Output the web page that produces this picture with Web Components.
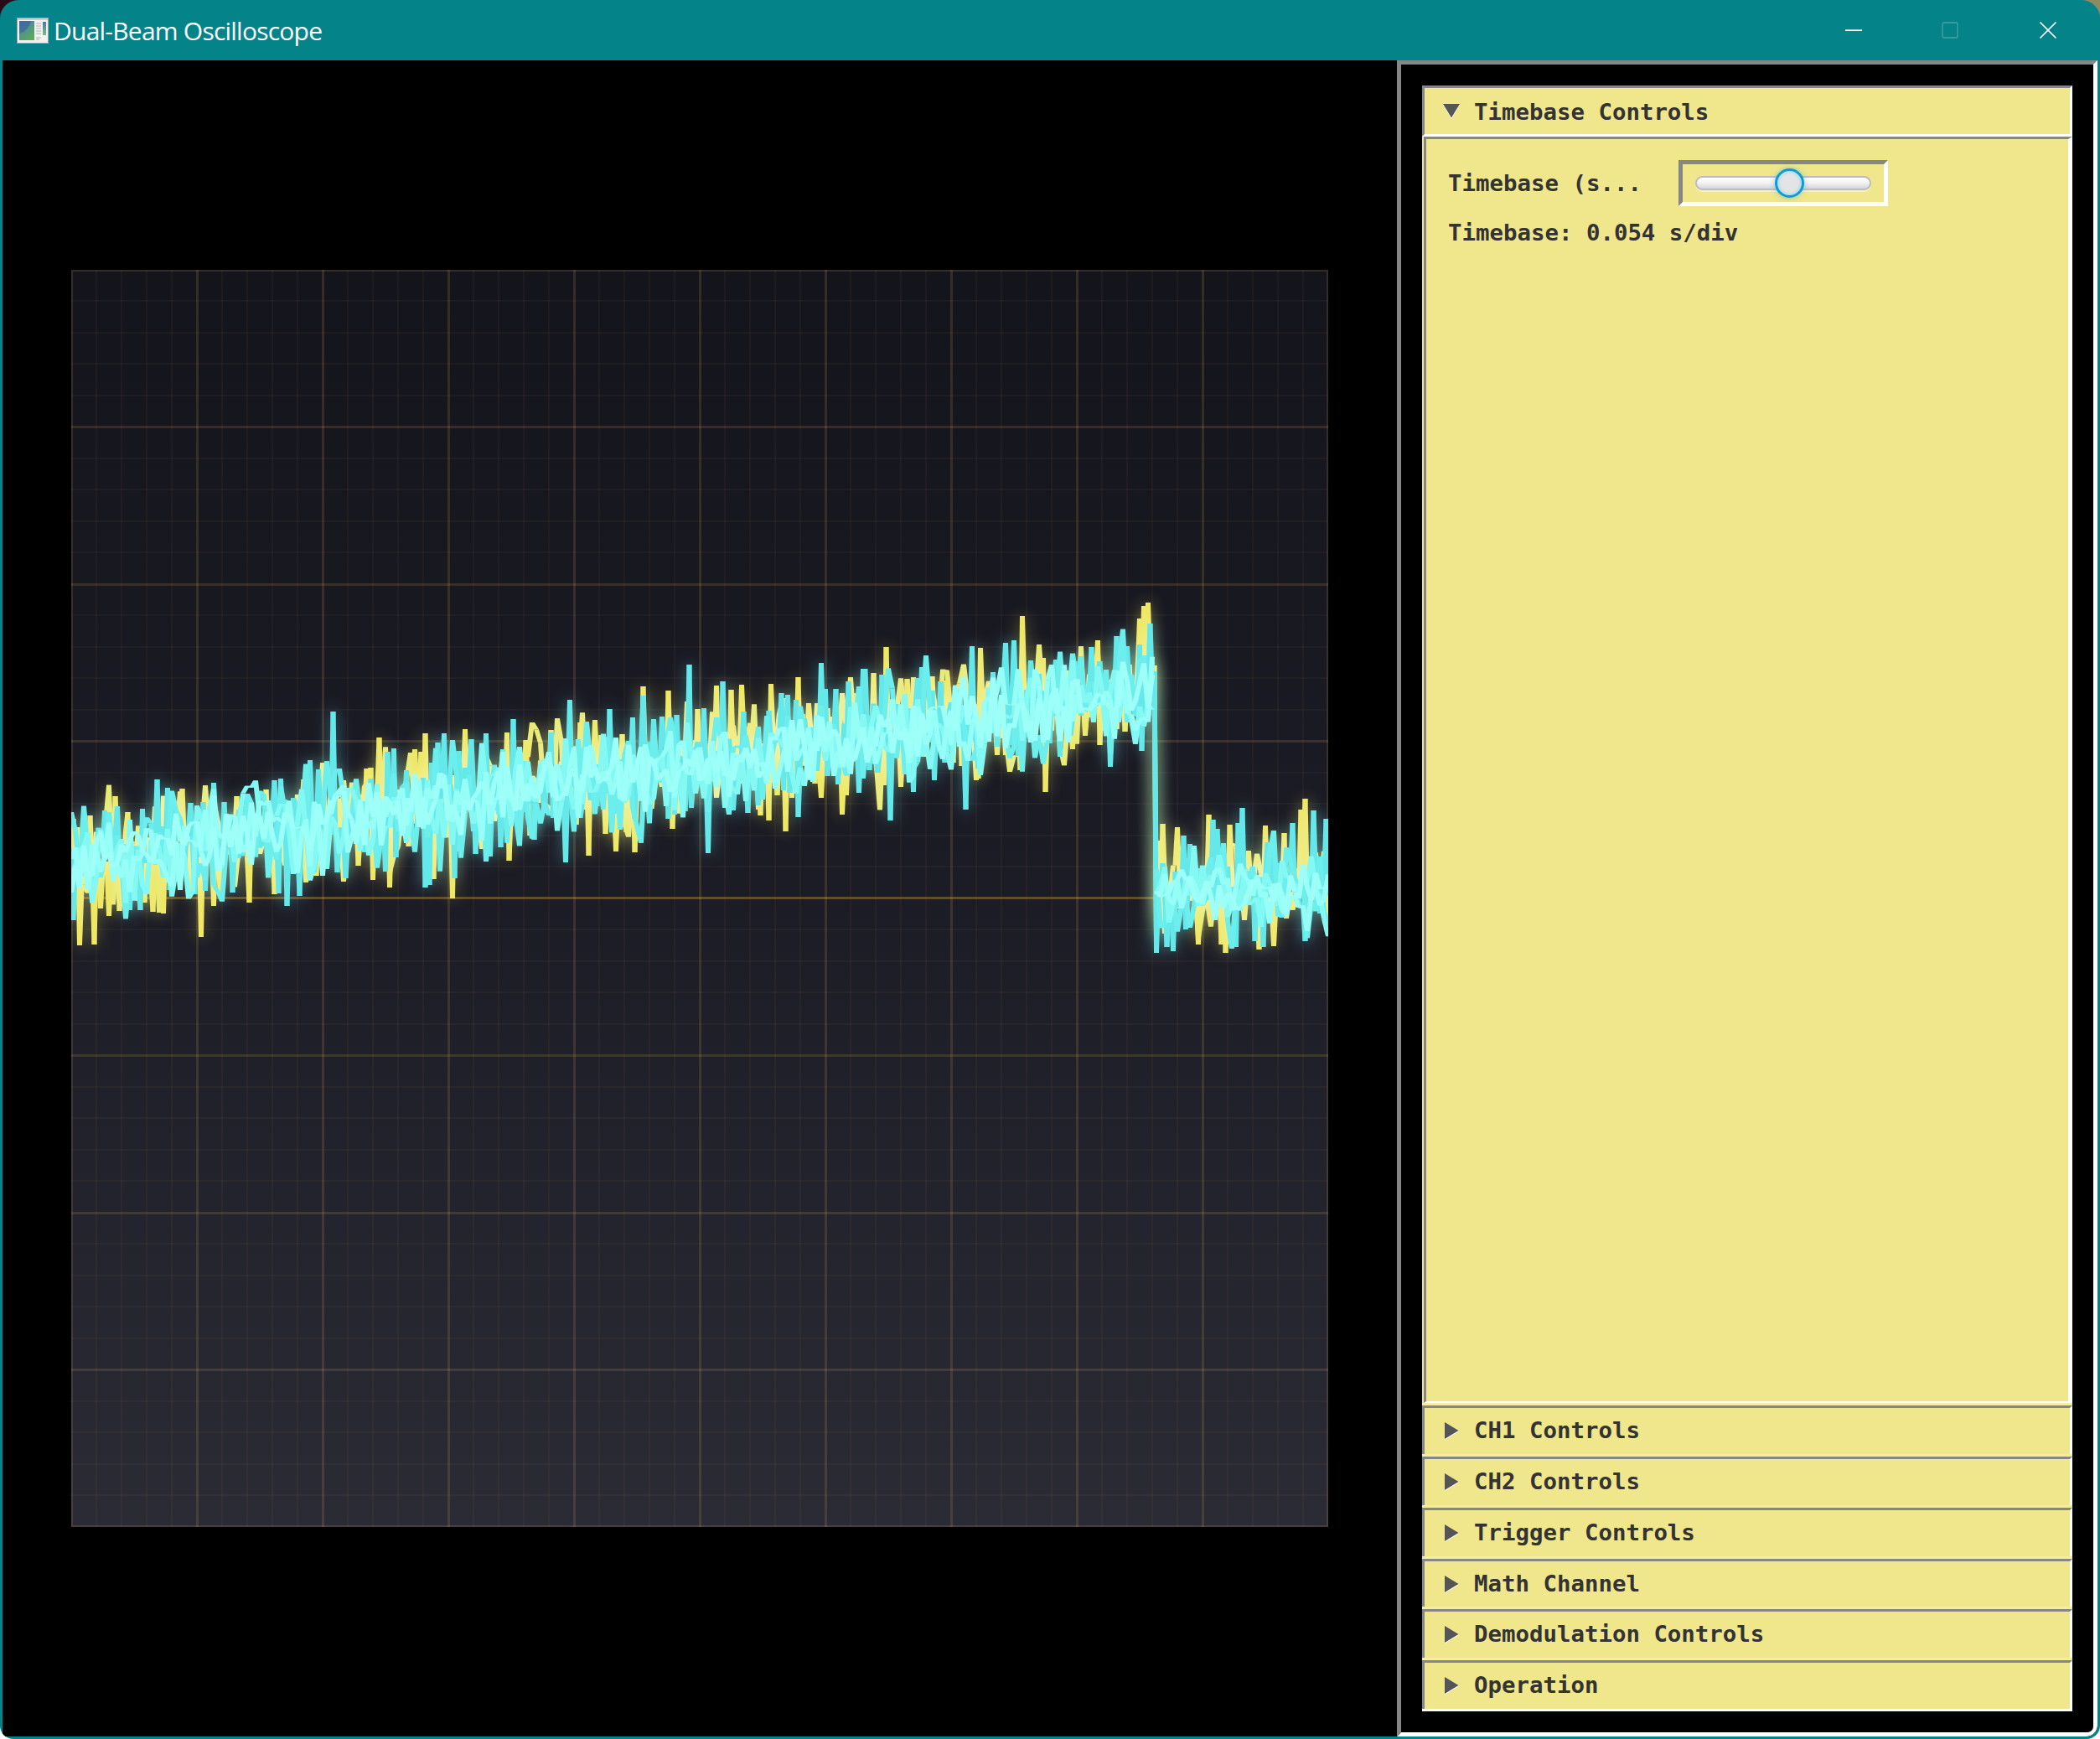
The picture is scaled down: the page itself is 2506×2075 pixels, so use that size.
<!DOCTYPE html>
<html>
<head>
<meta charset="utf-8">
<title>Dual-Beam Oscilloscope</title>
<style>
  html, body { margin: 0; padding: 0; }
  body {
    width: 2506px;
    height: 2075px;
    overflow: hidden;
    background:
      linear-gradient(#2a0a14, #2a0a14) 0 0 / 40px 40px no-repeat,
      linear-gradient(#8f8a60, #8f8a60) 100% 0 / 40px 40px no-repeat,
      #ffffff;
  }
</style>
</head>
<body>
<app-window>
  <title-bar slot="bar">Dual-Beam Oscilloscope</title-bar>
  <scope-view></scope-view>
  <control-panel>
    <accordion-section heading="Timebase Controls" open first>
      <timebase-row label="Timebase (s..." value="Timebase: 0.054 s/div"></timebase-row>
    </accordion-section>
    <accordion-section heading="CH1 Controls"></accordion-section>
    <accordion-section heading="CH2 Controls"></accordion-section>
    <accordion-section heading="Trigger Controls"></accordion-section>
    <accordion-section heading="Math Channel"></accordion-section>
    <accordion-section heading="Demodulation Controls"></accordion-section>
    <accordion-section heading="Operation"></accordion-section>
  </control-panel>
</app-window>

<script>
class AppWindow extends HTMLElement {
  connectedCallback() {
    this.attachShadow({ mode: 'open' });
    this.shadowRoot.innerHTML = `
      <style>
        :host {
          display: flex;
          flex-direction: column;
          width: 2506px;
          height: 2075px;
          box-sizing: border-box;
          background: #048388;
          border-radius: 22px 22px 16px 16px;
          overflow: hidden;
        }
        .body {
          flex: 1;
          min-height: 0;
          display: flex;
          margin: 0 3px 3px 3px;
          background: #000;
          border-bottom-right-radius: 14px;
          overflow: hidden;
        }
      </style>
      <slot name="bar"></slot>
      <div class="body"><slot></slot></div>
    `;
  }
}

class TitleBar extends HTMLElement {
  connectedCallback() {
    this.attachShadow({ mode: 'open' });
    this.shadowRoot.innerHTML = `
      <style>
        :host {
          display: flex;
          align-items: center;
          height: 72px;
          flex: none;
          color: #fff;
          font: 400 30px "Open Sans", "Noto Sans", sans-serif;
        }
        .icon { margin: 1px 6px 0 20px; flex: none; display: block; }
        .text { flex: 1; letter-spacing: -0.77px; padding-top: 1px; }
        .btn { display: flex; align-items: center; justify-content: center; width: 115px; height: 72px; }
        .btn.close { width: 119px; margin-right: 2.5px; }
        svg { display: block; }
      </style>
      <svg class="icon" width="38" height="31" viewBox="0 0 38 31">
        <defs>
          <linearGradient id="plot" x1="0" y1="0" x2="0.7" y2="1">
            <stop offset="0" stop-color="#3f6fa8"/>
            <stop offset="0.5" stop-color="#4f9488"/>
            <stop offset="1" stop-color="#5ea85a"/>
          </linearGradient>
          <linearGradient id="side" x1="0" y1="0" x2="0" y2="1">
            <stop offset="0" stop-color="#4a78a8"/>
            <stop offset="1" stop-color="#7fb98a"/>
          </linearGradient>
        </defs>
        <rect x="0.5" y="0.5" width="37" height="30" fill="#f2f2f2" stroke="#a5a5a5"/>
        <rect x="1" y="1" width="36" height="2" fill="#cfcfcf"/>
        <rect x="3" y="4" width="18" height="23" fill="url(#plot)"/>
        <path d="M3 4 H17 C15 12 10 17 3 19 Z" fill="#3d669e" opacity="0.7"/>
        <path d="M23 7h6M23 10h6M23 13h6M23 16h6M23 19h6M23 24h6M23 26h4" stroke="#b4b4b4" stroke-width="1"/>
        <rect x="31" y="5" width="4" height="16" fill="url(#side)"/>
      </svg>
      <span class="text"><slot></slot></span>
      <div class="btn"><svg width="20" height="20" viewBox="0 0 20 20"><path d="M0 10.2H20" stroke="#fff" stroke-width="1.7"/></svg></div>
      <div class="btn"><svg width="20" height="20" viewBox="0 0 20 20"><rect x="1" y="1" width="18" height="18" rx="2" fill="none" stroke="#389a9e" stroke-width="1.8"/></svg></div>
      <div class="btn close"><svg width="20" height="20" viewBox="0 0 20 20"><path d="M0.5 0.5L19.5 19.5M19.5 0.5L0.5 19.5" stroke="#f2f6f6" stroke-width="1.6"/></svg></div>
    `;
  }
}

// spike tables read off the trace, screen px [x, y]
const CYAN = [
  [188,930],[199,940],[170,965],[126,967],[139,962],[207,955],[227,958],[243,957],[255,934],[268,957],[298,953],[328,931],[334,929],[351,952],[369,907],[379,918],[398,849],[434,928],[443,929],[462,897],[471,893],[486,919],[495,928],[514,910],[523,886],[530,875],[563,882],[548,896],
  [88,1098],[156,1086],[167,1086],[203,1062],[233,1067],[277,1065],[244,1063],[332,1066],[342,1081],[358,1069],[390,1037],[403,1041],[412,1048],[435,1017],[459,1040],[473,1023],[507,1059],[512,1056],[542,1048],[568,1019],
  [580,875],[613,858],[658,874],[681,835],[698,892],[728,846],[754,856],[767,830],[779,858],[790,855],
  [586,1022],[597,1011],[619,977],[638,1002],[660,976],[674,1029],[693,976],[712,962],[732,971],[758,977],[773,952],[797,977],
  [807,853],[822,793],[841,845],[863,813],[887,849],[918,848],[932,827],[940,829],[949,835],[961,857],[979,791],[985,822],[998,822],[1013,813],[1029,798],
  [805,972],[817,968],[825,964],[846,1018],[867,960],[874,967],[893,970],[904,961],[935,943],[943,946],[953,975],[975,920],[988,926],[1000,936],[1026,946],
  [1032,798],[1052,805],[1069,840],[1101,796],[1096,809],[1112,824],[1122,813],[1145,823],[1161,771],[1185,802],[1199,767],[1210,764],[1230,788],[1240,804],[1260,787],
  [1037,919],[1047,922],[1063,979],[1090,945],[1116,931],[1127,910],[1153,966],[1168,917],[1190,891],[1205,889],[1215,902],[1222,880],[1242,863],[1252,887],
  [1283,789],[1302,772],[1313,789],[1333,759],[1345,771],[1360,769],[1373,744],
  [1264,903],[1277,878],[1324,915],[1363,896],
  [1380,1137],[1388,1030],[1412,997],[1420,1007],[1448,978],[1453,989],[1478,982],[1483,964],[1513,1005],[1521,1004],[1542,982],[1568,967],[1582,977],
  [1392,1130],[1399,1135],[1414,1109],[1474,1130],[1498,1123],[1508,1130],[1557,1123],[1575,1090]
];
const YELLOW = [
  [87,977],[93,987],[107,973],[119,944],[137,950],[152,969],[218,941],[245,954],[283,950],[317,942],[363,930],[409,931],[438,917],[443,916],[453,880],[495,894],[502,897],[508,875],[556,870],
  [96,1128],[113,1127],[130,1093],[143,1087],[182,1088],[195,1090],[121,1084],[173,1077],[224,1068],[241,1118],[255,1081],[263,1065],[297,1077],[327,1067],[370,1038],[377,1045],[427,1033],[445,1050],[465,1059],[487,1010],[517,1049],[539,1072],
  [606,874],[628,883],[657,871],[692,862],[709,859],[718,877],[743,876],[767,819],[797,824],
  [608,1027],[621,993],[632,997],[687,984],[702,1021],[723,995],[736,1016],[747,993],[758,1017],[777,965],
  [833,846],[855,818],[872,823],[886,817],[899,870],[921,816],[953,808],[966,839],[988,845],[1022,827],
  [802,989],[917,979],[908,973],[928,949],[938,992],[946,952],[972,935],[979,952],[1004,972],[1010,949],
  [1043,803],[1058,772],[1083,810],[1112,807],[1131,812],[1137,813],[1146,817],[1170,773],[1221,735],[1245,785],[1257,797],
  [1055,937],[1075,939],[1104,903],[1138,910],[1147,914],[1167,929],[1191,901],[1199,901],[1217,919],[1247,945],
  [1272,800],[1294,783],[1311,764],[1360,738],[1365,723],[1369,719],
  [1264,897],[1281,894],[1296,872],[1313,889],[1332,870],[1343,873],
  [1379,1118],[1388,983],[1405,987],[1425,1015],[1442,972],[1467,984],[1490,1015],[1511,985],[1532,994],[1557,953],[1552,966],
  [1431,1127],[1444,1098],[1463,1137],[1458,1127],[1486,1098],[1502,1133],[1520,1129],[1536,1096],[1582,1103]
];

class ScopeView extends HTMLElement {
  connectedCallback() {
    this.attachShadow({ mode: 'open' });
    this.shadowRoot.innerHTML = `
      <style>
        :host {
          display: flex;
          flex: 1;
          min-width: 0;
          align-items: center;
          justify-content: center;
          background: #000;
        }
        canvas { display: block; width: 1500px; height: 1500px; }
      </style>
      <canvas width="1500" height="1500"></canvas>
    `;
    this.draw(this.shadowRoot.querySelector('canvas').getContext('2d'));
  }

  samples(table, seed, amp, step) {
    let s = seed;
    const rnd = () => {
      s = (s * 16807) % 2147483647;
      return s / 2147483647;
    };
    const count = Math.round(1500 / step);
    const pts = [];
    for (let i = 0; i <= count; i++) {
      const x = 85 + i * step;
      const before = x < 1378;
      const mid = before ? 1030 - (x - 85) * (205 / 1292) : 1062;
      const wander = Math.sin(x / 37 + seed) * 6;
      pts.push([x - 85, mid + wander + (rnd() + rnd() - 1) * amp * (before ? 1 : 0.82) - 322]);
    }
    table.forEach(([x, y]) => {
      const i = Math.max(0, Math.min(count, Math.round((x - 85) / step)));
      pts[i][1] = y - 322;
    });
    return pts;
  }

  quads(ctx, pts, color, hw, skipEdge) {
    ctx.fillStyle = color;
    for (let i = 0; i < pts.length - 1; i++) {
      const [x0, y0] = pts[i];
      const [x1, y1] = pts[i + 1];
      // filler layers stop at the falling edge, only the beam itself crosses it
      if (skipEdge && x0 + 85 < 1378 && x1 + 85 >= 1378) continue;
      ctx.beginPath();
      ctx.moveTo(x0 - hw, y0);
      ctx.lineTo(x0 + hw, y0);
      ctx.lineTo(x1 + hw, y1);
      ctx.lineTo(x1 - hw, y1);
      ctx.closePath();
      ctx.fill();
    }
  }

  glow(ctx, pts, color) {
    ctx.save();
    ctx.filter = 'blur(9px)';
    ctx.strokeStyle = color;
    ctx.lineWidth = 8;
    ctx.lineJoin = 'bevel';
    ctx.beginPath();
    pts.forEach(([x, y], i) => (i ? ctx.lineTo(x, y) : ctx.moveTo(x, y)));
    ctx.stroke();
    ctx.restore();
  }

  draw(ctx) {
    const bg = ctx.createLinearGradient(0, 0, 0, 1500);
    bg.addColorStop(0, '#14141c');
    bg.addColorStop(0.5, '#1c1c26');
    bg.addColorStop(1, '#2a2b35');
    ctx.fillStyle = bg;
    ctx.fillRect(0, 0, 1500, 1500);

    // minor grid
    ctx.fillStyle = 'rgba(255, 190, 90, 0.045)';
    for (let i = 1; i < 50; i++) if (i % 5) ctx.fillRect(i * 30 - 1, 0, 2, 1500);
    for (let i = 1; i < 40; i++) if (i % 5) ctx.fillRect(0, Math.floor(i * 37.5) - 1, 1500, 2);

    // major grid
    ctx.fillStyle = 'rgba(255, 190, 90, 0.14)';
    for (let i = 1; i < 10; i++) ctx.fillRect(i * 150 - 1, 0, 3, 1500);
    for (let i = 1; i < 8; i++) {
      if (i !== 4) ctx.fillRect(0, Math.floor(i * 187.5) - 1, 1500, 3);
    }
    ctx.fillStyle = 'rgba(255, 190, 70, 0.3)';
    ctx.fillRect(0, 748, 1500, 3);

    ctx.strokeStyle = 'rgba(255, 190, 90, 0.14)';
    ctx.lineWidth = 2;
    ctx.strokeRect(1, 1, 1498, 1498);

    const yellow = this.samples(YELLOW, 4711, 40, 2.5);
    const yellowBody = this.samples([], 2903, 92, 5);
    const cyan = this.samples(CYAN, 90210, 40, 2.5);
    const body = this.samples([], 7741, 92, 5);
    const coreA = this.samples([], 31337, 72, 5);
    const coreB = this.samples([], 15485, 58, 5);
    const coreC = this.samples([], 86028, 50, 5);

    this.glow(ctx, yellow, 'rgba(240, 230, 90, 0.34)');
    this.glow(ctx, yellowBody, 'rgba(240, 230, 90, 0.3)');
    this.quads(ctx, yellowBody, 'rgb(232, 234, 118)', 3, true);
    this.quads(ctx, yellow, 'rgb(238, 232, 100)', 3);

    ctx.globalCompositeOperation = 'screen';
    this.glow(ctx, cyan, 'rgba(90, 230, 235, 0.42)');
    this.glow(ctx, body, 'rgba(90, 230, 235, 0.3)');
    ctx.globalCompositeOperation = 'source-over';
    this.quads(ctx, cyan, 'rgb(100, 232, 234)', 3);
    this.quads(ctx, body, 'rgb(108, 238, 236)', 3, true);

    // pale core where the beam overlaps itself
    this.quads(ctx, coreA, 'rgb(132, 248, 243)', 3, true);
    this.quads(ctx, coreB, 'rgb(150, 253, 247)', 3, true);
    this.quads(ctx, coreC, 'rgb(158, 255, 249)', 3, true);
  }
}

class ControlPanel extends HTMLElement {
  connectedCallback() {
    this.attachShadow({ mode: 'open' });
    this.shadowRoot.innerHTML = `
      <style>
        :host {
          display: block;
          flex: none;
          width: 836px;
          box-sizing: border-box;
          background: #000;
          border: 5px solid;
          border-color: #868686 #fff #fff #868686;
          padding: 25px 25px 25px 25px;
          border-bottom-right-radius: 12px;
        }
        .list {
          display: flex;
          flex-direction: column;
          height: 100%;
          box-sizing: border-box;
          border-bottom: 3px solid #fff;
        }
      </style>
      <div class="list"><slot></slot></div>
    `;
  }
}

class AccordionSection extends HTMLElement {
  connectedCallback() {
    const open = this.hasAttribute('open');
    const first = this.hasAttribute('first');
    this.attachShadow({ mode: 'open' });
    const arrow = open
      ? '<polygon points="0,1 20,1 10,18" fill="#fff"/><polygon points="0,0 20,0 10,16.5" fill="#555"/>'
      : '<polygon points="0,1 17,11 0,21" fill="#fff"/><polygon points="0,0 16.5,10 0,20" fill="#555"/>';
    this.shadowRoot.innerHTML = `
      <style>
        :host {
          display: flex;
          flex-direction: column;
          flex: ${open ? '1' : 'none'};
          min-height: 0;
          height: ${open ? 'auto' : '60.8px'};
          box-sizing: border-box;
          background: #f0e68c;
          color: #333;
          font: 700 27.4px "DejaVu Sans Mono", monospace;
          border-top: ${first ? '0' : '3px solid #f6ee9c'};
        }
        .head {
          flex: ${open ? 'none' : '1'};
          display: flex;
          align-items: center;
          box-sizing: border-box;
          height: ${open ? '61px' : 'auto'};
          border: solid;
          border-width: 3px 3px ${open ? '3px' : '0'} 3px;
          border-color: #868686 #fff #fff #868686;
          padding-left: ${open ? '22px' : '24px'};
        }
        svg { display: block; flex: none; margin-right: ${open ? '17px' : '18px'}; }
        .label { white-space: pre; padding-top: ${open ? '1px' : '0'}; padding-bottom: ${open ? '0' : '2px'}; }
        .content {
          flex: 1;
          min-height: 0;
          margin-left: 2px;
          box-sizing: border-box;
          border: solid;
          border-width: 3px 5px 2px 3px;
          border-color: #868686 #fff #fff #868686;
          padding: 25px 26px;
        }
      </style>
      <div class="head">
        <svg width="${open ? 20 : 17}" height="${open ? 18 : 21}" viewBox="0 0 ${open ? 20 : 17} ${open ? 18 : 21}">${arrow}</svg>
        <span class="label">${this.getAttribute('heading')}</span>
      </div>
      ${open ? '<div class="content"><slot></slot></div>' : ''}
    `;
  }
}

class TimebaseRow extends HTMLElement {
  connectedCallback() {
    this.attachShadow({ mode: 'open' });
    this.shadowRoot.innerHTML = `
      <style>
        :host { display: flex; flex-direction: column; gap: 16px; }
        .row { display: flex; align-items: center; }
        .name { width: 274.5px; flex: none; white-space: pre; }
        .value { white-space: pre; }
      </style>
      <div class="row"><span class="name">${this.getAttribute('label')}</span><slider-box></slider-box></div>
      <div class="value">${this.getAttribute('value')}</div>
    `;
  }
}

class SliderBox extends HTMLElement {
  connectedCallback() {
    this.attachShadow({ mode: 'open' });
    this.shadowRoot.innerHTML = `
      <style>
        :host {
          display: flex;
          align-items: center;
          width: 250px;
          height: 55px;
          flex: none;
          box-sizing: border-box;
          border: 5px solid;
          border-color: #868686 #fff #fff #868686;
          padding: 0 15px;
        }
        .track {
          position: relative;
          flex: 1;
          height: 17px;
          box-sizing: border-box;
          border: 2px solid #bdbdbd;
          border-radius: 9px;
          background: linear-gradient(#ffffff, #f4f4f4 45%, #d6d6d6);
          box-shadow: 0 2px 1px rgba(255, 255, 255, 0.45);
        }
        .thumb {
          position: absolute;
          left: 93px;
          top: -11px;
          width: 35px;
          height: 35px;
          box-sizing: border-box;
          border: 3px solid #0b9dd7;
          border-radius: 50%;
          background: #e4e4e4;
          box-shadow: 0 0 6px rgba(60, 170, 220, 0.55), inset 0 0 3px 2px rgba(170, 220, 240, 0.9);
        }
      </style>
      <div class="track"><div class="thumb"></div></div>
    `;
  }
}

customElements.define('app-window', AppWindow);
customElements.define('title-bar', TitleBar);
customElements.define('scope-view', ScopeView);
customElements.define('control-panel', ControlPanel);
customElements.define('accordion-section', AccordionSection);
customElements.define('timebase-row', TimebaseRow);
customElements.define('slider-box', SliderBox);
</script>
</body>
</html>
